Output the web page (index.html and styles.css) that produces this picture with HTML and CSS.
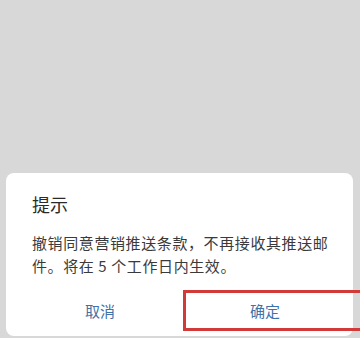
FILE: index.html
```html
<!DOCTYPE html>
<html lang="zh-CN">
<head>
<meta charset="utf-8">
<link rel="stylesheet" href="styles.css">
</head>
<body>
<div class="screen">
  <div class="dialog">
    <div class="title">提示</div>
    <div class="message">撤销同意营销推送条款，不再接收其推送邮件。将在 5 个工作日内生效。</div>
    <div class="actions">
      <div class="btn cancel">取消</div>
      <div class="btn confirm">确定<span class="highlight"></span></div>
    </div>
  </div>
</div>
</body>
</html>
```
FILE: styles.css
```css
html, body {
  margin: 0;
  padding: 0;
  background: #d8d8d8;
  overflow: hidden;
}
.screen {
  width: 360px;
  height: 338px;
  display: flex;
  flex-direction: column;
  justify-content: flex-end;
  font-family: "Noto Sans CJK SC", "Noto Sans", sans-serif;
}
.dialog {
  margin: 0 7px 2px 6px;
  background: #ffffff;
  border-radius: 8px;
  padding: 19px 6px 5px 16px;
  display: flex;
  flex-direction: column;
}
.title {
  padding-left: 10px;
  font-size: 18px;
  line-height: 24px;
  color: #2a2a2a;
}
.message {
  margin-top: 15px;
  margin-left: 10px;
  width: 302px;
  font-size: 15px;
  letter-spacing: 0.6px;
  line-height: 23px;
  color: #3a3a3a;
}
.actions {
  margin-top: 13px;
  display: flex;
  gap: 5px;
}
.btn {
  height: 41px;
  display: flex;
  align-items: center;
  justify-content: center;
  font-size: 15px;
  color: #3f72a8;
}
.cancel {
  width: 156px;
}
.confirm {
  flex: 1;
  position: relative;
}
.highlight {
  position: absolute;
  left: 0;
  top: 0;
  right: -30px;
  bottom: 0;
  border: 3px solid #d23a3a;
  box-sizing: border-box;
}
```
